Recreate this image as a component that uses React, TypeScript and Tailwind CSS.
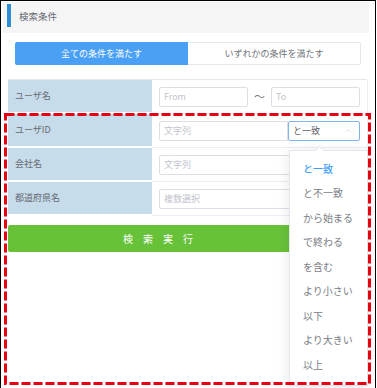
import React from "react";
import { ChevronUp } from "lucide-react";

const options = ["と一致", "と不一致", "から始まる", "で終わる", "を含む", "より小さい", "以下", "より大きい", "以上"];

const Label = ({ text }: { text: string }) => (
  <div className="w-[144px] shrink-0 bg-[#c7dcea] border-b-2 border-white flex items-center pl-[7px] text-[9px] text-[#666a72]">
    {text}
  </div>
);

const TextInput = ({ placeholder, className = "" }: { placeholder: string; className?: string }) => (
  <div className={`h-[20px] border border-[#dcdfe6] rounded-[2px] bg-white flex items-center pl-[4px] text-[9px] text-[#c0c4cc] ${className}`}>
    {placeholder}
  </div>
);

export default function App() {
  return (
    <div
      className="relative w-[377px] h-[388px] overflow-hidden bg-white"
      style={{ fontFamily: '"Noto Sans CJK JP", "Noto Sans", sans-serif' }}
    >
      <div className="w-[376px] h-full border-l border-t border-r border-black">
        {/* header */}
        <div className="mt-[1px] ml-[2px] w-[366px] h-[31px] bg-[#f5f5f5] flex items-start">
          <div className="ml-[4px] mt-[2px] w-[4px] h-[23px] bg-[#2c8ed4]" />
          <div className="ml-[8px] mt-[7px] text-[9.5px] leading-[14px] text-[#666a72]">検索条件</div>
        </div>

        {/* toggle */}
        <div className="mt-[9px] ml-[14px] w-[346px] h-[23px] flex text-[9px]">
          <div className="w-[173px] bg-[#4aa0f5] text-white flex items-center justify-center rounded-l-[2px]">
            全ての条件を満たす
          </div>
          <div className="flex-1 border border-l-0 border-[#e4e7ed] text-[#70737a] flex items-center justify-center rounded-r-[2px]">
            いずれかの条件を満たす
          </div>
        </div>

        {/* table */}
        <div className="mt-[14px] ml-[7px] w-[359px] border-t border-[#e4e7ed]">
          <div className="flex h-[34px]">
            <Label text="ユーザ名" />
            <div className="flex-1 flex items-center px-[7px] border-b border-r border-[#ebeef5]">
              <TextInput placeholder="From" className="w-[89px]" />
              <div className="w-[23px] text-center text-[11px] text-[#70737a]">〜</div>
              <TextInput placeholder="To" className="w-[89px]" />
            </div>
          </div>
          <div className="flex h-[34px]">
            <Label text="ユーザID" />
            <div className="flex-1 flex items-center px-[7px] border-b border-r border-[#ebeef5]">
              <TextInput placeholder="文字列" className="w-[129px] rounded-r-none" />
              <div className="w-[72px] h-[20px] border border-[#7db5ec] rounded-[2px] bg-white flex items-center justify-between pl-[4px] pr-[6px] text-[9px] text-[#606266]">
                <span>と一致</span>
                <ChevronUp size={9} strokeWidth={1.5} className="text-[#c0c4cc]" />
              </div>
            </div>
          </div>
          <div className="flex h-[34px]">
            <Label text="会社名" />
            <div className="flex-1 flex items-center px-[7px] border-b border-r border-[#ebeef5]">
              <TextInput placeholder="文字列" className="flex-1" />
            </div>
          </div>
          <div className="flex h-[34px]">
            <Label text="都道府県名" />
            <div className="flex-1 flex items-center px-[7px] border-b border-r border-[#ebeef5]">
              <TextInput placeholder="複数選択" className="flex-1" />
            </div>
          </div>
        </div>

        {/* search button */}
        <div className="mt-[9px] ml-[7px] w-[300px] h-[27px] bg-[#67c23a] rounded-[2px] flex items-center justify-center text-white text-[10px] tracking-[10px] pl-[10px]">
          検索実行
        </div>
      </div>

      {/* select dropdown */}
      <div className="absolute left-[289px] top-[150px] w-[79px] h-[236px] bg-white border border-[#e4e7ed] shadow-[0_2px_12px_rgba(0,0,0,0.1)] pt-[5px]">
        <div className="absolute -top-[4px] left-[26px] w-[7px] h-[7px] bg-white border-l border-t border-[#e4e7ed] rotate-45" />
        {options.map((o, i) => (
          <div
            key={o}
            className={`h-[24.5px] flex items-center pl-[13px] text-[10px] ${i === 0 ? "text-[#409eff] font-medium" : "text-[#7a7d84]"}`}
          >
            {o}
          </div>
        ))}
      </div>

      {/* annotation */}
      <svg className="absolute inset-0 pointer-events-none" width="377" height="388">
        <rect x="5.5" y="114.5" width="364" height="269" fill="none" stroke="#e60012" strokeWidth="3" strokeDasharray="9 3" />
      </svg>
    </div>
  );
}
